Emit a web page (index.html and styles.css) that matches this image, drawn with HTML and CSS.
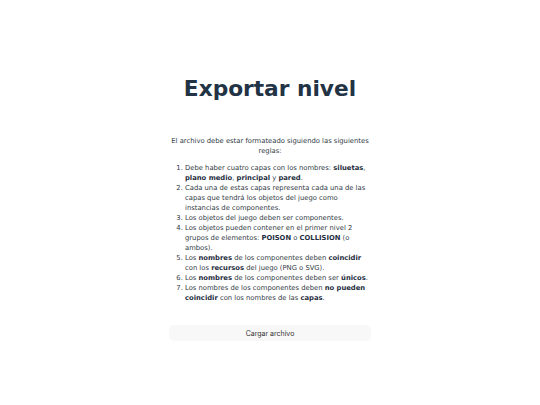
FILE: index.html
```html
<!DOCTYPE html>
<html lang="es">
<head>
<meta charset="utf-8">
<link rel="stylesheet" href="styles.css">
</head>
<body>
<main class="page">
  <h1 class="title">Exportar nivel</h1>
  <section class="rules">
    <p class="intro">El archivo debe estar formateado siguiendo las siguientes reglas:</p>
    <ol class="list">
      <li>Debe haber cuatro capas con los nombres: <b>siluetas</b>, <b>plano medio</b>, <b>principal</b> y <b>pared</b>.</li>
      <li>Cada una de estas capas representa cada una de las capas que tendrá los objetos del juego como instancias de componentes.</li>
      <li>Los objetos del juego deben ser componentes.</li>
      <li>Los objetos pueden contener en el primer nivel 2 grupos de elementos: <b>POISON</b> o <b>COLLISION</b> (o ambos).</li>
      <li>Los <b>nombres</b> de los componentes deben <b>coincidir</b> con los <b>recursos</b> del juego (PNG o SVG).</li>
      <li>Los <b>nombres</b> de los componentes deben ser <b>únicos</b>.</li>
      <li>Los nombres de los componentes deben <b>no pueden coincidir</b> con los nombres de las <b>capas</b>.</li>
    </ol>
  </section>
  <button class="upload">Cargar archivo</button>
</main>
</body>
</html>
```

FILE: styles.css
```css
html, body {
  margin: 0;
  padding: 0;
  background: #ffffff;
}
.page {
  width: 202px;
  margin: 0 auto;
  padding-top: 74px;
  display: flex;
  flex-direction: column;
  align-items: stretch;
  font-family: "DejaVu Sans", sans-serif;
  color: #2f3a44;
}
.title {
  margin: 0;
  text-align: center;
  font-size: 21.7px;
  line-height: 30px;
  font-weight: bold;
  color: #223345;
}
.rules {
  margin-top: 32px;
  font-size: 6.8px;
  line-height: 10px;
}
.intro {
  margin: 0;
  text-align: center;
}
.list {
  margin: 7px 0 0 0;
  padding-left: 16px;
}
.list b {
  color: #1e2d3d;
}
.upload {
  margin-top: 22px;
  height: 16px;
  border: none;
  border-radius: 5px;
  background: #f8f8f8;
  font-family: "Inter", sans-serif;
  font-size: 7px;
  color: #333;
}
```
